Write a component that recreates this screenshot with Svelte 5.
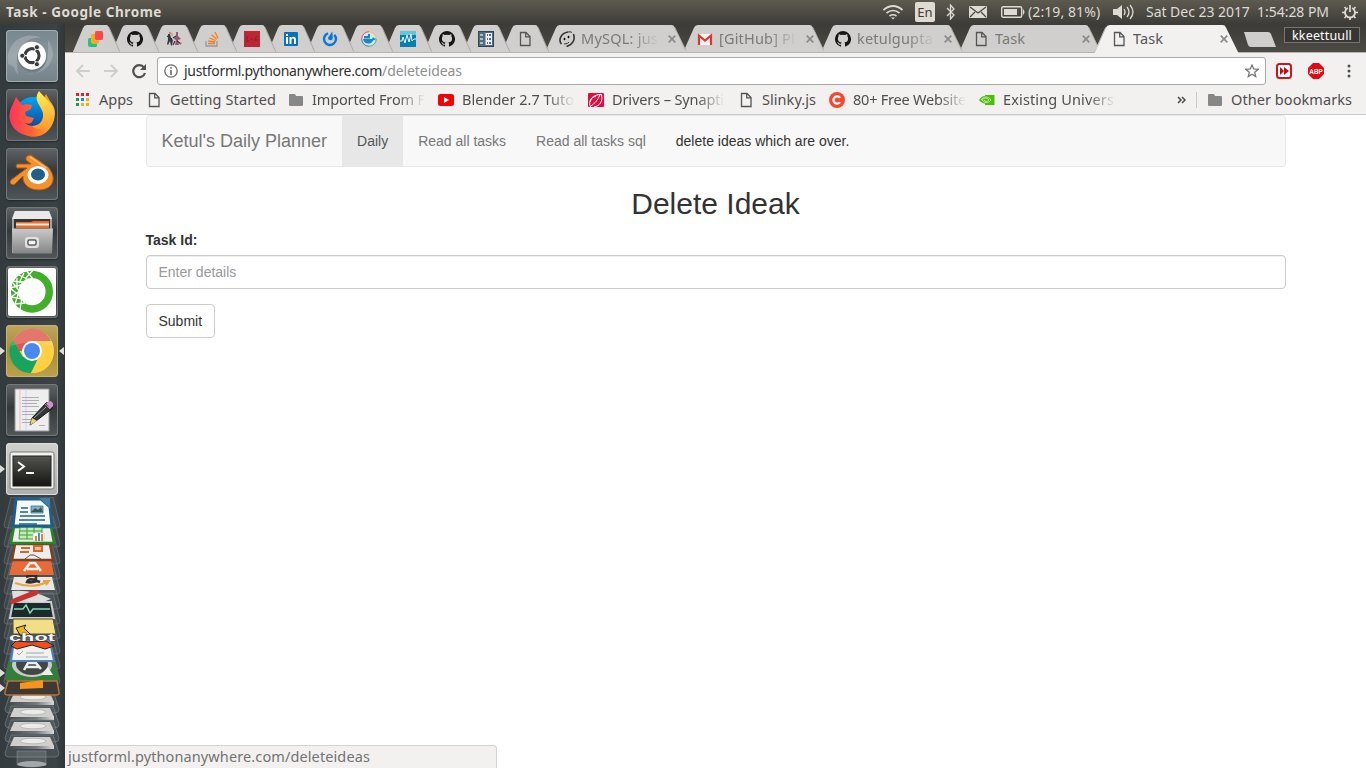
<script>
  // Spreads a label over the given width by adjusting its tracking.
  function fit(node, width) {
    if (!width) return;
    node.style.letterSpacing = '0px';
    const natural = node.getBoundingClientRect().width;
    node.style.letterSpacing = (width - natural) / node.textContent.length + 'px';
  }

  const pinned = ['layers', 'github', 'dancers', 'stack', 'red', 'linkedin', 'power', 'docker', 'pulse', 'github', 'panel', 'page'];
  const tabs = [
    { icon: 'mysql', title: 'MySQL: jus', w: 77, fade: true },
    { icon: 'gmail', title: '[GitHub] Pl', w: 76, fade: true },
    { icon: 'github', title: 'ketulgupta', w: 76, fade: true },
    { icon: 'page', title: 'Task', w: 30 },
    { icon: 'page', title: 'Task', w: 30, active: true }
  ];
  const bookmarks = [
    { icon: 'apps', title: 'Apps', w: 34 },
    { icon: 'page', title: 'Getting Started', w: 106 },
    { icon: 'folder', title: 'Imported From F', w: 113, fade: true },
    { icon: 'youtube', title: 'Blender 2.7 Tuto', w: 112, fade: true },
    { icon: 'leaf', title: 'Drivers – Synapti', w: 112, fade: true },
    { icon: 'page', title: 'Slinky.js', w: 54 },
    { icon: 'cred', title: '80+ Free Website', w: 113, fade: true },
    { icon: 'nvidia', title: 'Existing Univers', w: 111, fade: true }
  ];
  const apps = ['dash', 'firefox', 'blender', 'files', 'anaconda', 'chrome', 'gedit', 'terminal'];
  const disks = [693, 708, 722, 737];
  const nav = ['Daily', 'Read all tasks', 'Read all tasks sql', 'delete ideas which are over.'];
</script>

{#snippet glyph(name)}
  <svg class="glyph" width="16" height="16" viewBox="0 0 16 16">
    {#if name === 'layers'}
      <path d="M1.500 7H5v6h4v1.500q0 1.500-1.500 1.500H2Q0 16 0 14V8.500Q0 7 1.500 7z" fill="#1ac486" /><path d="M4.500 3H7v6.500h4V11q0 2-2 2H5q-2 0-2-2V4.500Q3 3 4.500 3z" fill="#ffa51f" /><rect x="7" y="0" width="8" height="9" rx="1.500" fill="#fb4a45" />
    {:else if name === 'github'}
      <path fill="#161616" d="M8 0a8 8 0 0 0-2.530 15.590c.4.070.55-.17.55-.38v-1.490C3.780 14.200 3.310 12.650 3.310 12.650c-.36-.93-.89-1.170-.89-1.170-.73-.5.060-.49.060-.49.8.060 1.230.83 1.230.83.71 1.220 1.870.87 2.330.67.07-.52.28-.87.5-1.070C4.770 11.220 2.900 10.530 2.900 7.470c0-.87.31-1.590.82-2.150-.08-.2-.36-1.010.08-2.110 0 0 .67-.22 2.200.82a7.600 7.600 0 0 1 4 0c1.530-1.040 2.200-.82 2.200-.82.44 1.100.16 1.910.08 2.110.51.56.82 1.280.82 2.150 0 3.070-1.870 3.750-3.650 3.950.29.250.54.730.54 1.480v2.310c0 .21.150.46.55.38A8 8 0 0 0 8 0z" />
    {:else if name === 'dancers'}
      <path d="M2 3h2l1 4 2 2-1 5-1 1-1-5-2 4-1-1 1-4z" fill="#3d3542" /><path d="M10 1h2v4l3 3-3 1 1 5H9l1-5-2-1 2-3z" fill="#9c5570" /><path d="M1 5l5 3M7 7l3-2M11 10l4 3M9 10l-2 4" stroke="#283a50" stroke-width="1.200" /><circle cx="4" cy="2" r="1.200" fill="#c88c6d" /><path d="M6 2v3M14 12h2" stroke="#c88c6d" />
    {:else if name === 'stack'}
      <path d="M1 10v5h11v-5" fill="none" stroke="#999" stroke-width="1.300" /><path d="M3 12.500h7M3.200 10l7 1M4.200 7l6.600 2.500M6.500 3.800l5.300 4.500M10 1l3 6.200" stroke="#f48024" stroke-width="1.300" />
    {:else if name === 'red'}
      <rect width="16" height="16" fill="#bf2634" /><path d="M2 6h2l-2 4h3M6 8h3M13 5l-3 4h4" fill="none" stroke="#83202c" />
    {:else if name === 'linkedin'}
      <rect x="1" y="1" width="14" height="14" rx="1" fill="#0872b9" /><path d="M3 6h2v7H3zM3 3h2v2H3zM6.500 6h2v1c1.500-2 4.500-1.500 4.500 1.500V13h-2V9c0-2-2.500-2-2.500 0v4h-2z" fill="#fff" />
    {:else if name === 'power'}
      <path d="M6 2.300a6 6 0 1 0 6.300 1.500" fill="none" stroke="#0877dc" stroke-width="2.400" /><path d="M10.300.500l.5 6.500a2.300 2.300 0 1 1-4.500-.8z" fill="#0877dc" />
    {:else if name === 'docker'}
      <circle cx="8" cy="8" r="7.300" fill="#d6e4ec" stroke="#f4bc45" /><path d="M.7 8A7.300 7.300 0 0 1 8 .7" stroke="#ef5c7c" fill="none" /><path d="M.7 8A7.300 7.300 0 0 0 8 15.300" stroke="#2c8bd9" fill="none" /><path d="M8 15.300A7.300 7.300 0 0 0 15.300 8" stroke="#2cc5b9" fill="none" /><path d="M2 8h9l1-2 1 1.200 2 .2c-1 2-2 1.500-3 2-2 4.500-9 4.500-10-1.400zM3 5h6v2.600H3zM7 3h2v2H7z" fill="#1488ca" />
    {:else if name === 'pulse'}
      <rect width="16" height="16" fill="#087fb1" /><path d="M0 0h16v4H0z" fill="#63c6d8" /><path d="M0 10h2l1-4 2 6 2-8 2 7 2-8 1 7 2-2h2" fill="none" stroke="#e6f7fb" />
    {:else if name === 'panel'}
      <rect x=".500" y=".500" width="15" height="15" fill="#536b7c" stroke="#2e4656" /><path d="M7.500 2H14v12H7.500z" fill="#eef1f2" /><path d="M2 3h3v2H2zM2 7h3v2H2zM2 11h3v2H2z" fill="#a5c2cc" /><path d="M9 3h1v2H9zM11 3h2v2h-2zM9 7h1v2H9zM11 7h2v2h-2zM9 11h1v2H9zM11 11h2v2h-2z" fill="#536b7c" />
    {:else if name === 'page'}
      <path d="M3.500 1.500h5.500l4 4v9h-9.500zM8.700 1.700v4.100H13" fill="none" stroke="#555" stroke-width="1.300" />
    {:else if name === 'mysql'}
      <path d="M9 1C2 2-1 9 2.500 13M14.500 3c2 6-1 11-7 12.500" fill="none" stroke="#333" stroke-width="1.600" /><path d="M9 1q2-.6 4 .4" fill="none" stroke="#333" /><ellipse cx="5.500" cy="8" rx=".900" ry="1.300" /><ellipse cx="9.500" cy="6" rx=".900" ry="1.300" /><path d="M5 13q4 0 5-2" fill="none" stroke="#333" />
    {:else if name === 'gmail'}
      <path d="M1 3h14v11H1z" fill="#f5f3f2" /><path d="M2 14V4.500L8 9.500l6-5V14" fill="none" stroke="#dc3831" stroke-width="2.200" />
    {:else if name === 'apps'}
      {#each ['#e91f25', '#e91f25', '#e91f25', '#159957', '#2a80ee', '#f2b20d', '#159957', '#f2b20d', '#f2b20d'] as color, i}
        <rect x={1 + (i % 3) * 5} y={1 + Math.floor(i / 3) * 5} width="3" height="3" fill={color} />
      {/each}
    {:else if name === 'folder'}
      <path d="M1 3q0-1 1-1h5l1 2h6q1 0 1 1v8q0 1-1 1H2q-1 0-1-1z" fill="#878787" />
    {:else if name === 'youtube'}
      <rect y="2" width="16" height="12" rx="2.500" fill="#f00505" /><path d="M6 5l5 3-5 3z" fill="#fff" />
    {:else if name === 'leaf'}
      <rect y="1" width="16" height="14" rx="1" fill="#e50b42" /><path d="M2.500 15C-.5 8 5 2 14 2.500M3 14C6 12 10 8 12 3M6 15c6-1 9-6 7.500-12M2 10q1-5 6-6" fill="none" stroke="#fff" />
    {:else if name === 'cred'}
      <circle cx="8" cy="8" r="8" fill="#f8462c" /><path d="M11 5.900a3.600 3.600 0 1 0 0 4.200" fill="none" stroke="#fff" stroke-width="2.300" />
    {:else if name === 'nvidia'}
      <path d="M6 3h9.500v10H6z" fill="#4dbd08" /><path d="M0 8c4-6 10-5 13 0-3 5-9 5-13 0z" fill="#4dbd08" /><path d="M2 8c3-4 7-4 10 0-3 4-7 3-9 0 3-3 5-2 7 0-2 2-4 2-5 0" fill="none" stroke="#d7f0c6" stroke-width=".800" />
    {/if}
  </svg>
{/snippet}

{#snippet launcherIcon(name)}
  <svg class="art" width="52" height="52" viewBox="0 0 52 52">
    {#if name === 'dash'}
      <path d="M12 45C-3 24 17 6 38 12c-12-4-28 3-27 20zM42 10c14 20-5 38-25 33 12 5 25-5 25-20zM2 34c-3-22 17-34 34-26-14-2-27 8-26 30z" fill="#cfd8dc" opacity=".3" />
      <circle cx="26" cy="27" r="14.500" fill="#59656a" opacity=".5" /><circle cx="26" cy="25.700" r="14" fill="#fff" /><circle cx="26" cy="25.700" r="7" fill="none" stroke="#3b3e3e" stroke-width="3.200" /><path d="M26 25.700h-10M26 25.700l5-9M26 25.700l5 9" stroke="#fff" stroke-width="1.300" /><circle cx="26" cy="25.700" r="5.300" fill="#fff" />
      <g fill="#353b3d" stroke="#fff" stroke-width=".800"><circle cx="16.300" cy="25.700" r="2.500" /><circle cx="30.900" cy="17.200" r="2.500" /><circle cx="30.900" cy="34.200" r="2.500" /></g>
    {:else if name === 'firefox'}
      <circle cx="27" cy="26" r="18" fill="url(#fxBlue)" />
      <path d="M10 8l6 8 4-1 6 1-1 4-6 3 1 4 8 2-2 4c-3 3-7 1-8 0 6 7 18 4 22-4 3-7 1-14-3-19l3-5 4 7c5 6 6 11 4 19-4 14-17 20-29 15C5 42 0 28 6 17z" fill="url(#fxOrange)" />
      <path d="M33 2c-6 9 1 13 4 22 1 9-5 13-11 13 6 6 18 3 21-6 5-13-5-18-14-29z" fill="url(#fxGold)" />
    {:else if name === 'blender'}
      <path d="M5 32l16-12H11q-2-2 0-4h14l-5-4q-1-5 5-5l17 12c10 11 5 23-9 23-12 0-17-8-16-14L8 37q-6-1-3-5z" fill="#f5912d" stroke="#a95717" /><path d="M24 9l16 11" stroke="#ffc27a" stroke-width="1.500" /><ellipse cx="32" cy="27" rx="10.500" ry="9" fill="#fff" /><ellipse cx="32" cy="26.500" rx="7" ry="6" fill="#205d8d" />
    {:else if name === 'files'}
      <path d="M6 11l3-7h34l3 7v35H6z" fill="#a5a5a5" /><path d="M9 4h34l3 8H6z" fill="#e9e9e9" /><path d="M8 12h36v11H8z" fill="#353535" /><path d="M10 21v-6h15l2-1h16v7" fill="#e86b28" /><path d="M10 17.500h33" stroke="#f6eee4" stroke-width="2" /><path d="M6 21.500h41l-1 25H7z" fill="url(#steel)" /><rect x="20" y="31" width="12" height="9" rx="2" fill="#ccc" stroke="#e2e2e2" stroke-width="2" /><rect x="22" y="33" width="8" height="5" rx="1" fill="#f4f4f4" stroke="#222" />
    {:else if name === 'anaconda'}
      <rect x="2" y="2" width="48" height="48" rx="2" fill="#fff" /><circle cx="26" cy="25.700" r="17.300" fill="none" stroke="#42af2b" stroke-width="7.400" /><path d="M28 3l-9 10M20 4l7 9M11 8l12 6M18 7l-5 10M5 15l12 1M11 12v11M4 22l11-3M7 17l8 10M4 22l10 8M5 31l10-7M5 31l12 2M9 38l4-12M9 38l10-1M14 44l2-13" stroke="#fff" stroke-width="1.300" />
    {:else if name === 'chrome'}
      <circle cx="26" cy="26" r="22" fill="#ffd044" /><path d="M26 26H8.500L7 15C17-1 38 1 45 16H26z" fill="#df584d" /><path d="M26 26L25 48C7 48-2 28 7 15l10 17 9-1z" fill="#18a45e" /><path d="M27 35h9L25 48l-7-16z" fill="#18a45e" /><path d="M35 27L25 48c19 1 27-18 20-32H26z" fill="#ffd044" /><path d="M5 21C10-2 42-2 47 21q-20-7-42 0z" fill="#fff" opacity=".18" /><circle cx="26" cy="26" r="10" fill="#fff" /><circle cx="26" cy="26" r="8" fill="#4789ee" />
    {:else if name === 'gedit'}
      <path d="M9 5h34v42H9z" fill="#eee" stroke="#999" /><path d="M14 5v42" stroke="#f5b5b5" /><path d="M20 5v42" stroke="#c8d4f0" /><path d="M16 13.500h17M16 16.500h17M16 19.500h15M16 22.500h17M16 27.500h16M16 30.500h12M16 35.500h10M16 38.500h8M33 41.500h6" stroke="#aeaeb0" /><path d="M41 18l6 6-17 13-6 4 2-7z" fill="#343738" stroke="#191919" /><path d="M24 41l2-7 5 3z" fill="#ead17c" /><path d="M40 19l4-2q4 1 3 5l-3 3z" fill="#d88cca" /><path d="M39 20l5 5M28 34l12-11" stroke="#999" />
    {:else if name === 'terminal'}
      <rect x="4" y="9" width="44" height="37" rx="2" fill="#f2f2f0" stroke="#77786f" /><rect x="7" y="13" width="38" height="30" fill="url(#screen)" stroke="#20221e" /><path d="M12 19l6 4.500-6 4.500M20 30h8" fill="none" stroke="#fff" stroke-width="2" />
    {/if}
  </svg>
{/snippet}

<div class="desktop">
  <header class="panel">
    <span class="window-title" use:fit={156}>Task - Google Chrome</span>
    <div class="indicators">
      <svg width="20" height="16" viewBox="0 0 20 16"><path d="M.5 6q9.500-8 19 0M3.500 9q6.500-5 13 0M6.500 12q3.500-2.500 7 0" fill="none" stroke="#dfdbd2" stroke-width="1.700" /><path d="M8 13.500h4l-2 2z" fill="#dfdbd2" /></svg>
      <span class="lang">En</span>
      <svg width="10" height="16" viewBox="0 0 10 16"><path d="M1 4l7 7-3.500 4V1L8 5l-7 7" fill="none" stroke="#dfdbd2" stroke-width="1.300" /></svg>
      <svg width="18" height="12" viewBox="0 0 18 12"><rect width="18" height="12" rx="1" fill="#dfdbd2" /><path d="M1 1l8 6 8-6M1 11l5-5M17 11l-5-5" fill="none" stroke="#494842" stroke-width="1.200" /></svg>
      <svg width="24" height="12" viewBox="0 0 24 12"><rect x=".700" y=".700" width="20" height="10.600" rx="1.500" fill="none" stroke="#dfdbd2" stroke-width="1.400" /><rect x="3" y="3" width="13" height="6" fill="#dfdbd2" /><path d="M22 3q3 3 0 6z" fill="#dfdbd2" /></svg>
      <span class="battery" use:fit={74}>(2:19, 81%)</span>
      <svg width="21" height="16" viewBox="0 0 21 16"><path d="M0 5h4l5-4v14l-5-4H0z" fill="#dfdbd2" /><path d="M11 5q2 3 0 6M14 3q4 5 0 10M17 1q6 7 0 14" fill="none" stroke="#dfdbd2" stroke-width="1.300" /></svg>
      <span class="date" use:fit={182}>Sat Dec 23 2017&nbsp; 1:54:28 PM</span>
      <svg width="16" height="16" viewBox="0 0 16 16"><path d="M5.800 4a5 5 0 1 0 4.400 0" fill="none" stroke="#dfdbd2" stroke-width="1.800" /><path d="M8 1v7M0 8.500h3M13 8.500h3M2.500 3l2 2M13.500 3l-2 2M2.500 14l2-2M13.500 14l-2-2M8 13v3" stroke="#dfdbd2" stroke-width="1.700" /></svg>
    </div>
  </header>

  <div class="workspace">
    <aside class="launcher">
      <svg width="0" height="0" class="defs">
        <defs>
          <linearGradient id="fxOrange" x2="1" y2="0"><stop stop-color="#ff345b" /><stop offset=".5" stop-color="#ff6532" /><stop offset="1" stop-color="#ffb52c" /></linearGradient>
          <linearGradient id="fxGold" x2="0" y2="1"><stop stop-color="#fff44f" /><stop offset="1" stop-color="#ff982f" /></linearGradient>
          <linearGradient id="fxBlue" x2="0" y2="1"><stop stop-color="#00a6f5" /><stop offset="1" stop-color="#11348d" /></linearGradient>
          <linearGradient id="steel" x2="0" y2="1"><stop stop-color="#cacaca" /><stop offset="1" stop-color="#858585" /></linearGradient>
          <linearGradient id="edge"><stop stop-color="#4a4c4e" /><stop offset=".6" stop-color="#77797a" /><stop offset="1" stop-color="#d9d9d8" /></linearGradient>
          <linearGradient id="screen" x2="0" y2="1"><stop stop-color="#53544f" /><stop offset="1" stop-color="#151612" /></linearGradient>
        </defs>
      </svg>
      {#each apps as app}
        <div class="tile {app}">
          {@render launcherIcon(app)}
          {#if app === 'chrome' || app === 'terminal'}<i class="running"></i>{/if}
          {#if app === 'chrome'}<i class="focused"></i>{/if}
        </div>
      {/each}
      <svg class="folded" width="65" height="271" viewBox="0 497 65 271">
        <g fill="#87949a" fill-opacity=".12" stroke="#7d898e" stroke-opacity=".45">
          {#each [497, 516, 533, 548, 563, 578, 593, 608, 623, 638, 653] as y}
            <path d="M11 {y}h42l7 28q0 3-3 3H7q-3 0-3-3z" />
          {/each}
        </g>
        {#each disks as y}
          <path d="M11 {y - 2}h42l6 18q0 4-4 4H9q-4 0-4-4z" fill="#778286" fill-opacity=".2" stroke="#7e898d" stroke-opacity=".6" />
          <path d="M10 {y + 8}h44v4H10z" fill="url(#edge)" /><path d="M14 {y}h36l4 9H10z" fill="#cfcfcd" /><ellipse cx="33" cy={y + 4} rx="13" ry="2.800" fill="#ebebe9" stroke="#a5a5a5" stroke-width=".600" />
        {/each}
        <path d="M17 751h29v14q-14 4-29 0z" fill="#a4abae" fill-opacity=".25" stroke="#8b9498" stroke-width=".500" /><ellipse cx="32" cy="764" rx="14.500" ry="3" fill="#a4a8aa" />
        <path d="M10 657h43l6 20q1 4-3 4H8q-4 0-3-4z" fill="#337e38" /><path d="M8 681h49l2 11q1 3-3 3H8q-4 0-3-3z" fill="#3e3935" stroke="#b87337" stroke-width="1.500" />
        <path d="M20 683l23-3v8l-23 1z" fill="#f8931e" />
        <ellipse cx="32" cy="665" rx="20" ry="12" fill="#c9cbca" /><ellipse cx="32" cy="664" rx="16" ry="11" fill="#424644" /><path d="M24 670l4-7h8l5 6M26 667h13" fill="none" stroke="#eee" stroke-width="2.500" /><path d="M41 675l7-8 5 8z" fill="#eee" />
        <path d="M14 641h36l4 20H11z" fill="#f1f1ef" stroke="#4c81bd" stroke-width="2" /><path d="M17 653l2 2 4-4M26 653h18M26 657h22" fill="none" stroke="#9aa9b0" />
        <path d="M13 602h38l3 16H10z" fill="#1c2a2c" stroke="#c9cdcb" stroke-width="2" /><path d="M14 609h9l3-4 4 8 3-4h17" fill="none" stroke="#81d7b2" stroke-width="1.500" />
        <path d="M13 619h40l3 15H13z" fill="#f1de85" stroke="#55502f" /><path d="M16 628l10-3-2 3 7 7H20z" fill="#ecb41c" stroke="#222" />
        <path d="M16 641l14 1 16-1 8 5-9 3-13-4-15 4-6-3z" fill="#f44d19" stroke="#222" />
        <text x="9" y="641" textLength="46" lengthAdjust="spacingAndGlyphs" class="chat">chot</text>
        <path d="M12 591q20-2 39 8l-8 3-30-1z" fill="#dedfdd" /><path d="M10 600l27-11q3 2 0 6l-24 9q-4-1-3-4z" fill="#c73232" />
        <path d="M14 577h38l3 13H11z" fill="#e8e9e7" /><path d="M26 577q4-2 10-1v4q-8-2-9 2 4 1 10-1l3 1" fill="none" stroke="#2d2d2b" stroke-width="2.600" /><path d="M15 583q17 6 32-1M43 581h6l-3 4" fill="none" stroke="#f1a13a" stroke-width="2" />
        <path d="M13 560h38l3 15H9z" fill="#e66b37" />
        <path d="M24 571l6-8h5l6 8M27 569h11" fill="none" stroke="#f7efe9" stroke-width="2.600" />
        <path d="M15 544h35l3 16H12z" fill="#eee" stroke="#823e20" stroke-width="2.500" /><path d="M21 548h9M20 552h9M34 546h8v5h-8z" stroke="#d7652b" fill="#e8bd9d" stroke-width="2" /><path d="M25 559l5-4h4l7 4" fill="none" stroke="#555" />
        <path d="M14 527h37l3 16H11z" fill="#eee" stroke="#268822" stroke-width="2.500" /><path d="M20 527h22v12H19zM27 527v12M34 527v12M19 531h23M19 535h23" fill="#c4ecb5" stroke="#3ca035" /><path d="M33 533h11v8H33z" fill="#fff" stroke="#bbb" stroke-width=".500" /><path d="M35 541v-5h2v5zM41 541v-7h2v7z" fill="#eb7b25" /><path d="M38 541v-8h2v8z" fill="#4794cf" />
        <path d="M16 499h25l9 8 2 19H13z" fill="#f7f9f9" stroke="#1b5e90" stroke-width="3" /><path d="M39 498h11v10z" fill="#3f7fa6" /><path d="M21 508h7M20 512h8M20 516h25M19 520h26M19 524h18" stroke="#21618b" stroke-width="1.600" /><path d="M31 506h12v7H31z" fill="#7fb2d3" stroke="#21618b" stroke-width=".700" /><path d="M31 512l4-4 3 2 3-3 2 5z" fill="#3c5947" />
        <path d="M0 669l5 4-5 4zM0 684l5 4-5 4z" fill="#deded8" />
      </svg>
    </aside>

    <main class="browser">
      <div class="tabstrip">
        {#each pinned as icon, i}
          <div class="tab pinned" style:z-index={30 - i}>
            <svg class="shape" width="50" height="28" viewBox="0 0 50 28"><path d="M0 28l10.500-25q1.200-3 4-3h20q2 0 3 2.500l11 25.500z" fill="#d0cfcd" /><path d="M37.500 2.500l11 25" fill="none" stroke="#aaa9a6" /></svg>
            {@render glyph(icon)}
          </div>
        {/each}
        {#each tabs as tab, i}
          <div class="tab wide" class:active={tab.active} style:z-index={tab.active ? 40 : 15 - i}>
            <svg class="shape" width="153" height="29" viewBox="0 0 153 29"><path d={tab.active ? 'M0 29l11.500-26q1.200-3 4-3h117q2.500 0 3.500 2.500l13 26.500z' : 'M0 29l11.500-26q1.200-3 4-3h120q2.500 0 3.500 2.500l13 26.500z'} fill={tab.active ? '#f2f1f0' : '#d0cfcd'} /><path d={tab.active ? 'M0 28L11.500 2.500' : 'M139 2.500l12 25'} fill="none" stroke={tab.active ? '#cccbc8' : '#aaa9a6'} /></svg>
            {@render glyph(tab.icon)}
            <div class="tab-title" class:fade={tab.fade}><span use:fit={tab.w}>{tab.title}</span></div>
            <svg class="close" width="8" height="8" viewBox="0 0 8 8"><path d="M.7.7l6.600 6.600M7.300.7L.7 7.300" stroke="#8c8b89" stroke-width="1.700" /></svg>
          </div>
        {/each}
        <div class="new-tab"><svg width="33" height="15" viewBox="0 0 33 15"><path d="M1 0h24q2 0 3 2l5 13H8q-2 0-3-2z" fill="#cfcecc" /></svg></div>
        <div class="profile"><span use:fit={60}>kkeettuull</span></div>
      </div>

      <div class="toolbar">
        <svg width="16" height="16" viewBox="0 0 16 16"><path d="M15 8H2M8 2L2 8l6 6" fill="none" stroke="#cfcecc" stroke-width="2" /></svg>
        <svg width="16" height="16" viewBox="0 0 16 16"><path d="M1 8h13M8 2l6 6-6 6" fill="none" stroke="#cfcecc" stroke-width="2" /></svg>
        <svg width="16" height="16" viewBox="0 0 16 16"><path d="M13 4.500A6 6 0 1 0 14 10" fill="none" stroke="#505050" stroke-width="2.200" /><path d="M15 1v6H9z" fill="#505050" /></svg>
        <div class="omnibox">
          <svg width="14" height="14" viewBox="0 0 14 14"><circle cx="7" cy="7" r="6.200" fill="none" stroke="#6c6c6c" stroke-width="1.300" /><path d="M7 6v5M7 3v1.700" stroke="#6c6c6c" stroke-width="1.600" /></svg>
          <span class="url"><span use:fit={198}>justforml.pythonanywhere.com</span><span class="path" use:fit={80}>/deleteideas</span></span>
          <svg width="14" height="14" viewBox="0 0 14 14"><path d="M7 1l1.700 4 4.300.4-3.300 2.900 1 4.200L7 10.200l-3.700 2.300 1-4.200L1 5.400 5.300 5z" fill="none" stroke="#777" stroke-width="1.300" /></svg>
        </div>
        <svg class="ext" width="16" height="16" viewBox="0 0 16 16"><rect x="1" y="1" width="14" height="14" rx="2.500" fill="#fff" stroke="#c9171b" stroke-width="2" /><path d="M4 4l4 4-4 4zM8 4l5 4-5 4z" fill="#c40b12" /></svg>
        <svg class="ext" width="16" height="16" viewBox="0 0 16 16"><path d="M5 0h6l5 5v6l-5 5H5l-5-5V5z" fill="#e30910" /><text x="1.300" y="10.800" textLength="13.400" lengthAdjust="spacingAndGlyphs" class="abp">ABP</text></svg>
        <svg class="menu" width="4" height="14" viewBox="0 0 4 14"><circle cx="2" cy="2" r="1.500" fill="#505050" /><circle cx="2" cy="7" r="1.500" fill="#505050" /><circle cx="2" cy="12" r="1.500" fill="#505050" /></svg>
      </div>

      <div class="bookmarks">
        {#each bookmarks as item}
          <div class="bookmark">
            {@render glyph(item.icon)}
            <div class="bookmark-title" class:fade={item.fade} style:width="{item.fade ? 113 : Math.min(item.w, 105)}px"><span use:fit={item.w}>{item.title}</span></div>
          </div>
        {/each}
        <div class="overflow"><svg width="9" height="8" viewBox="0 0 9 8"><path d="M1 1l3 3-3 3M5 1l3 3-3 3" fill="none" stroke="#484848" stroke-width="1.500" /></svg></div>
        <div class="bookmark other">{@render glyph('folder')}<span class="other-title" use:fit={121}>Other bookmarks</span></div>
      </div>

      <section class="page">
        <div class="container">
          <nav class="navbar">
            <span class="brand">Ketul's Daily Planner</span>
            {#each nav as item, i}
              <span class="nav-item" class:current={i === 0} class:hovered={i === 3}>{item}</span>
            {/each}
          </nav>
          <h2>Delete Ideak</h2>
          <form>
            <label for="task">Task Id:</label>
            <input id="task" placeholder="Enter details" />
            <button type="button">Submit</button>
          </form>
        </div>
        <div class="status"><span use:fit={302}>justforml.pythonanywhere.com/deleteideas</span></div>
      </section>
    </main>
  </div>
</div>

<style>
  :global(body) { overflow: hidden; background: #fff; }
  .desktop { width: 1366px; height: 768px; display: flex; flex-direction: column; overflow: hidden; font: 14.5px/20px "Noto Sans", sans-serif; }
  .desktop * { box-sizing: border-box; }
  svg { flex: none; display: block; }
  span { white-space: nowrap; }
  .panel { height: 24px; flex: none; display: flex; align-items: center; justify-content: space-between; padding: 0 8px 0 6px; color: #dfdbd2; background: linear-gradient(#5d5b50, #3d3c38); }
  .window-title { font-size: 13.5px; font-weight: 700; }
  .indicators { display: flex; align-items: center; font-size: 14px; }
  .lang { width: 20px; height: 20px; margin: 0 11px 0 12px; border-radius: 2px; background: #dfdbd2; color: #3d3c38; font-size: 13px; line-height: 20px; text-align: center; }
  .indicators svg:nth-of-type(3) { margin-left: 13px; }
  .indicators svg:nth-of-type(4) { margin-left: 14px; }
  .battery { width: 73px; margin: 0 12px 0 3px; }
  .date { width: 183px; margin: 0 13px 0 12px; }

  .workspace { flex: 1; min-height: 0; display: flex; }
  .launcher { width: 65px; flex: none; padding-top: 6px; background: linear-gradient(90deg, #343b3e, #3b4346 85%, #30373a); }
  .defs { position: absolute; }
  .tile { position: relative; width: 52px; height: 52px; margin: 0 0 7px 6px; border-radius: 4px; background: linear-gradient(#606466, #34393b 45%, #515658); box-shadow: inset 0 0 0 1px #737879, 0 1px 2px #202629; }
  .tile.dash { background: linear-gradient(#78888f, #89949a 50%, #73828a); box-shadow: inset 0 0 0 1px #a4adb1, 0 1px 2px #202629; }
  .tile.chrome { background: linear-gradient(#bda75f, #a88d35 50%, #bba24a); box-shadow: inset 0 0 0 1px #c6b475; }
  .tile.terminal { background: linear-gradient(#d0d0cf, #adadac); box-shadow: inset 0 0 0 1px #ddd; margin-bottom: 2px; }
  .running { position: absolute; left: -6px; top: 22px; border: 4px solid transparent; border-left: 5px solid #dddcd7; border-right: 0; }
  .focused { position: absolute; left: 53px; top: 22px; border: 4px solid transparent; border-right: 5px solid #dddcd7; border-left: 0; }
  .chat { font: bold 11px "Liberation Sans", sans-serif; fill: #f4f4f4; stroke: #333; stroke-width: .5px; paint-order: stroke; }

  .browser { flex: 1; min-width: 0; display: flex; flex-direction: column; }
  .tabstrip { height: 29px; flex: none; display: flex; padding: 1px 6px 0 7px; background: linear-gradient(#3c3b37, #4c4b44); box-shadow: inset 0 -1px #b5b4b1; isolation: isolate; }
  .tab { position: relative; flex: none; height: 28px; display: flex; align-items: center; }
  .tab > :not(.shape) { position: relative; }
  .shape { position: absolute; left: 0; top: 0; height: 27px; }
  .pinned { width: 49px; margin-right: -10px; padding-left: 16px; }
  .wide { width: 151px; margin-right: -13px; padding-left: 19px; }
  .active { width: 153px; margin-right: 0; }
  .active .shape { height: 28px; }
  .tab-title { width: 78px; height: 20px; line-height: 19px; margin: 0 9px 0 6px; overflow: hidden; color: #7b7a78; }
  .active .tab-title { color: #555; }
  .fade { mask-image: linear-gradient(90deg, #000 calc(100% - 28px), transparent); }
  .new-tab { margin: 7px 0 0 -2px; }
  .profile { width: 76px; height: 16px; margin: 2px 0 0 auto; border: 1px solid #77766f; background: #373632; color: #fff; font-size: 12.5px; line-height: 15px; text-align: center; }
  .toolbar { height: 33px; flex: none; display: flex; align-items: center; padding: 4px 15px 1px 10px; background: #f2f1f0; }
  .toolbar > svg:nth-child(2), .toolbar > svg:nth-child(3) { margin-left: 12px; }
  .omnibox { flex: 1; height: 28px; margin-left: 10px; display: flex; align-items: center; padding: 0 6px; border: 1px solid #aaa9a7; border-radius: 3px; background: #fff; }
  .url { flex: 1; margin-left: 6px; font-size: 14px; color: #303030; }
  .path { color: #8f8f8f; }
  .ext { margin-left: 10px; }
  .ext + .ext { margin-left: 16px; }
  .menu { margin-left: 23px; }
  .abp { font: bold 7.5px "Liberation Sans", sans-serif; fill: #fff; }
  .bookmarks { height: 29px; flex: none; display: flex; align-items: center; gap: 13px; padding-left: 10px; background: #f2f1f0; border-bottom: 1px solid #cbcac8; color: #4e4e4e; }
  .bookmark { flex: none; display: flex; align-items: center; gap: 8px; }
  .bookmark-title, .other-title { height: 20px; line-height: 18px; }
  .overflow { margin-left: auto; }
  .other { height: 16px; width: 170px; border-left: 1px solid #c9c8c6; margin-left: -3px; padding-left: 10px; }

  .page { flex: 1; min-height: 0; display: flex; flex-direction: column; justify-content: space-between; background: #fff; color: #333; font: 14px/20px "Liberation Sans", Arial, sans-serif; }
  .container { width: 1170px; margin: 0 auto; padding: 0 15px; }
  .navbar { height: 52px; display: flex; border: 1px solid #e7e7e7; border-radius: 4px; background: #f8f8f8; line-height: 50px; color: #777; }
  .brand { padding: 0 15px; font-size: 18px; }
  .nav-item { padding: 0 15px; }
  .current { background: #e7e7e7; color: #555; }
  .hovered { color: #333; }
  h2 { margin: 20px 0 10px; font-size: 30px; line-height: 33px; font-weight: 500; text-align: center; }
  form { display: flex; flex-direction: column; align-items: flex-start; }
  label { font-weight: 700; margin-bottom: 5px; }
  input { width: 100%; height: 34px; padding: 6px 12px; border: 1px solid #ccc; border-radius: 4px; font: inherit; box-shadow: inset 0 1px 1px rgba(0,0,0,.075); }
  input::placeholder { color: #999; opacity: 1; }
  button { height: 34px; margin-top: 15px; padding: 6px 12px; border: 1px solid #ccc; border-radius: 4px; background: #fff; color: #333; font: inherit; }
  .status { width: 432px; height: 23px; padding: 1px 0 0 3px; border: solid #d4d3d1; border-width: 1px 1px 0 0; border-radius: 0 4px 0 0; background: #f2f1f0; color: #737373; font: 14.5px/19px "Noto Sans", sans-serif; }
</style>
